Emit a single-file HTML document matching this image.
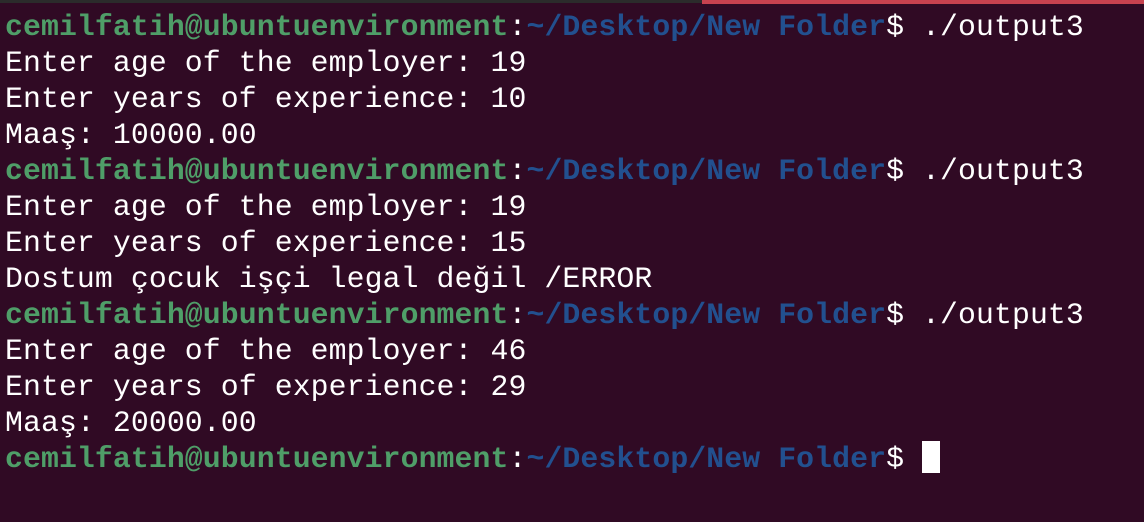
<!DOCTYPE html>
<html><head><meta charset="utf-8"><style>
html,body{margin:0;padding:0;width:1144px;height:522px;overflow:hidden;background:#300a24;}
.bar{position:absolute;top:0;left:0;width:1144px;height:3px;background:#2b2b2b;}
.bar2{position:absolute;top:0;left:702px;width:442px;height:4px;background:#c7424f;}
pre{position:absolute;left:5px;top:9px;margin:0;font-family:"Liberation Mono",monospace;font-size:29.8px;letter-spacing:0.1px;line-height:36px;color:#ffffff;}
.g{color:#4f9e68;font-weight:bold}
.b{color:#22508f;font-weight:bold}
.c{display:inline-block;width:18px;height:32px;background:#fff;vertical-align:-6px}
</style></head><body>
<div class="bar"></div><div class="bar2"></div>
<pre><span class="g">cemilfatih@ubuntuenvironment</span>:<span class="b">~/Desktop/New Folder</span>$ ./output3
Enter age of the employer: 19
Enter years of experience: 10
Maaş: 10000.00
<span class="g">cemilfatih@ubuntuenvironment</span>:<span class="b">~/Desktop/New Folder</span>$ ./output3
Enter age of the employer: 19
Enter years of experience: 15
Dostum çocuk işçi legal değil /ERROR
<span class="g">cemilfatih@ubuntuenvironment</span>:<span class="b">~/Desktop/New Folder</span>$ ./output3
Enter age of the employer: 46
Enter years of experience: 29
Maaş: 20000.00
<span class="g">cemilfatih@ubuntuenvironment</span>:<span class="b">~/Desktop/New Folder</span>$ <span class="c"></span></pre>
</body></html>
